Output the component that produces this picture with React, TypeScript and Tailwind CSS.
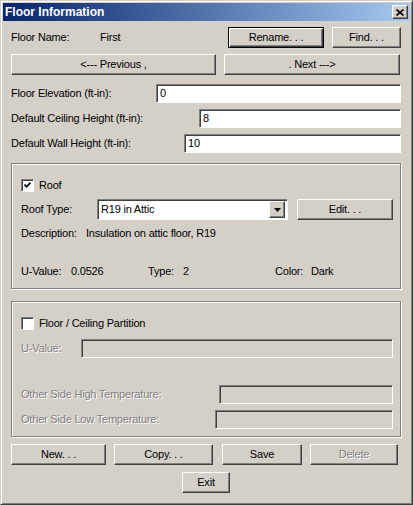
import React from "react";

const raised =
  "border border-white border-r-[#404040] border-b-[#404040] shadow-[inset_-1px_-1px_#808080]";
const sunken =
  "border border-[#808080] border-r-white border-b-white shadow-[inset_1px_1px_#404040]";
const disabledText = "text-[#808080] [text-shadow:1px_1px_#fff]";

interface BtnProps {
  children: React.ReactNode;
  className?: string;
  isDefault?: boolean;
  disabled?: boolean;
}

const Btn = ({ children, className = "", isDefault = false, disabled = false }: BtnProps) => (
  <button
    type="button"
    className={`h-[21px] flex items-center justify-center bg-[#d4d0c8] ${
      isDefault
        ? "border border-black shadow-[inset_1px_1px_#fff,inset_-1px_-1px_#404040,inset_-2px_-2px_#808080]"
        : raised
    } ${disabled ? disabledText : "text-black"} ${className}`}
  >
    {children}
  </button>
);

const Field = ({ value = "", className = "", disabled = false }: { value?: string; className?: string; disabled?: boolean }) => (
  <div
    className={`h-[19px] flex items-center pl-[3px] ${sunken} ${
      disabled ? "bg-[#d4d0c8]" : "bg-white"
    } ${className}`}
  >
    {value}
  </div>
);

const Check = ({ checked }: { checked?: boolean }) => (
  <div className={`w-[13px] h-[13px] bg-white flex items-center justify-center ${sunken}`}>
    {checked && (
      <svg width="9" height="9" viewBox="0 0 9 9">
        <path d="M1.5 3.5 L3.5 5.8 L7.5 1.6" stroke="#000" strokeWidth="1.7" fill="none" />
      </svg>
    )}
  </div>
);

const GroupBox = ({ children, className = "" }: { children: React.ReactNode; className?: string }) => (
  <div
    className={`border border-[#808080] shadow-[inset_1px_1px_#fff,1px_1px_#fff] pl-[9px] pr-[7px] ${className}`}
  >
    {children}
  </div>
);

export default function App() {
  return (
    <div className="w-[413px] h-[505px] bg-[#d4d0c8] border border-[#d4d0c8] border-r-[#404040] border-b-[#404040] shadow-[inset_1px_1px_#fff,inset_-1px_-1px_#808080] p-[2px] text-[11px] tracking-[-0.2px] leading-[13px] text-black font-['Liberation_Sans',Arial,sans-serif]">
      {/* Title bar */}
      <div className="h-[18px] bg-gradient-to-r from-[#0a246a] to-[#a6caf0] flex items-center justify-between pl-[2px] pr-[2px]">
        <span className="text-white font-bold text-[12px] tracking-normal">Floor Information</span>
        <div className={`w-[16px] h-[14px] bg-[#d4d0c8] flex items-center justify-center ${raised}`}>
          <svg width="8" height="7" viewBox="0 0 8 7">
            <path d="M0.5 0.5 L7.5 6.5 M7.5 0.5 L0.5 6.5" stroke="#000" strokeWidth="1.6" fill="none" />
          </svg>
        </div>
      </div>

      <div className="pl-[8px] pr-[9px]">
        {/* Floor name */}
        <div className="mt-[6px] h-[21px] flex items-center">
          <span className="w-[89px]">Floor Name:</span>
          <span className="flex-1">First</span>
          <Btn isDefault className="w-[96px]">Rename. . .</Btn>
          <Btn className="w-[69px] ml-[8px]">Find. . .</Btn>
        </div>

        {/* Prev / next */}
        <div className="mt-[6px] flex items-center">
          <Btn className="w-[205px]">&lt;--- Previous ,</Btn>
          <Btn className="w-[176px] ml-[8px]">. Next ---&gt;</Btn>
        </div>

        {/* Heights */}
        <div className="mt-[9px] flex items-center">
          <span className="w-[145px]">Floor Elevation (ft-in):</span>
          <Field value="0" className="flex-1" />
        </div>
        <div className="mt-[6px] flex items-center">
          <span className="w-[188px]">Default Ceiling Height (ft-in):</span>
          <Field value="8" className="flex-1" />
        </div>
        <div className="mt-[6px] flex items-center">
          <span className="w-[173px]">Default Wall Height (ft-in):</span>
          <Field value="10" className="flex-1" />
        </div>

        {/* Roof group */}
        <GroupBox className="mt-[10px] h-[126px] pt-[15px]">
          <div className="h-[13px] flex items-center gap-[5px]">
            <Check checked />
            <span>Roof</span>
          </div>
          <div className="mt-[7px] flex items-center">
            <span className="w-[76px]">Roof Type:</span>
            <div className={`w-[191px] h-[21px] bg-white flex items-center justify-between pl-[3px] pr-[2px] ${sunken}`}>
              <span>R19 in Attic</span>
              <div className={`w-[16px] h-[17px] bg-[#d4d0c8] flex items-center justify-center ${raised}`}>
                <svg width="7" height="4" viewBox="0 0 7 4">
                  <path d="M0 0 H7 L3.5 4 Z" fill="#000" />
                </svg>
              </div>
            </div>
            <Btn className="w-[96px] ml-[9px]">Edit. . .</Btn>
          </div>
          <div className="mt-[7px] h-[13px] flex items-center">
            <span className="w-[65px]">Description:</span>
            <span>Insulation on attic floor, R19</span>
          </div>
          <div className="mt-[25px] h-[13px] flex items-center">
            <span className="w-[50px]">U-Value:</span>
            <span className="w-[77px]">0.0526</span>
            <span className="w-[35px]">Type:</span>
            <span className="w-[92px]">2</span>
            <span className="w-[36px]">Color:</span>
            <span>Dark</span>
          </div>
        </GroupBox>

        {/* Partition group */}
        <GroupBox className="mt-[12px] h-[136px] pt-[15px]">
          <div className="h-[13px] flex items-center gap-[5px]">
            <Check />
            <span>Floor / Ceiling Partition</span>
          </div>
          <div className="mt-[9px] flex items-center">
            <span className={`w-[60px] ${disabledText}`}>U-Value:</span>
            <Field disabled className="flex-1" />
          </div>
          <div className="mt-[27px] flex items-center">
            <span className={`w-[198px] ${disabledText}`}>Other Side High Temperature:</span>
            <Field disabled className="flex-1" />
          </div>
          <div className="mt-[6px] flex items-center">
            <span className={`w-[194px] ${disabledText}`}>Other Side Low Temperature:</span>
            <Field disabled className="flex-1" />
          </div>
        </GroupBox>

        {/* Bottom buttons */}
        <div className="mt-[7px] flex items-center">
          <Btn className="w-[95px]">New. . .</Btn>
          <Btn className="w-[99px] ml-[8px]">Copy. . .</Btn>
          <Btn className="w-[80px] ml-[9px]">Save</Btn>
          <Btn disabled className="w-[88px] ml-[8px]">Delete</Btn>
        </div>
        <div className="mt-[7px] flex justify-center">
          <Btn className="w-[48px]">Exit</Btn>
        </div>
      </div>
    </div>
  );
}
